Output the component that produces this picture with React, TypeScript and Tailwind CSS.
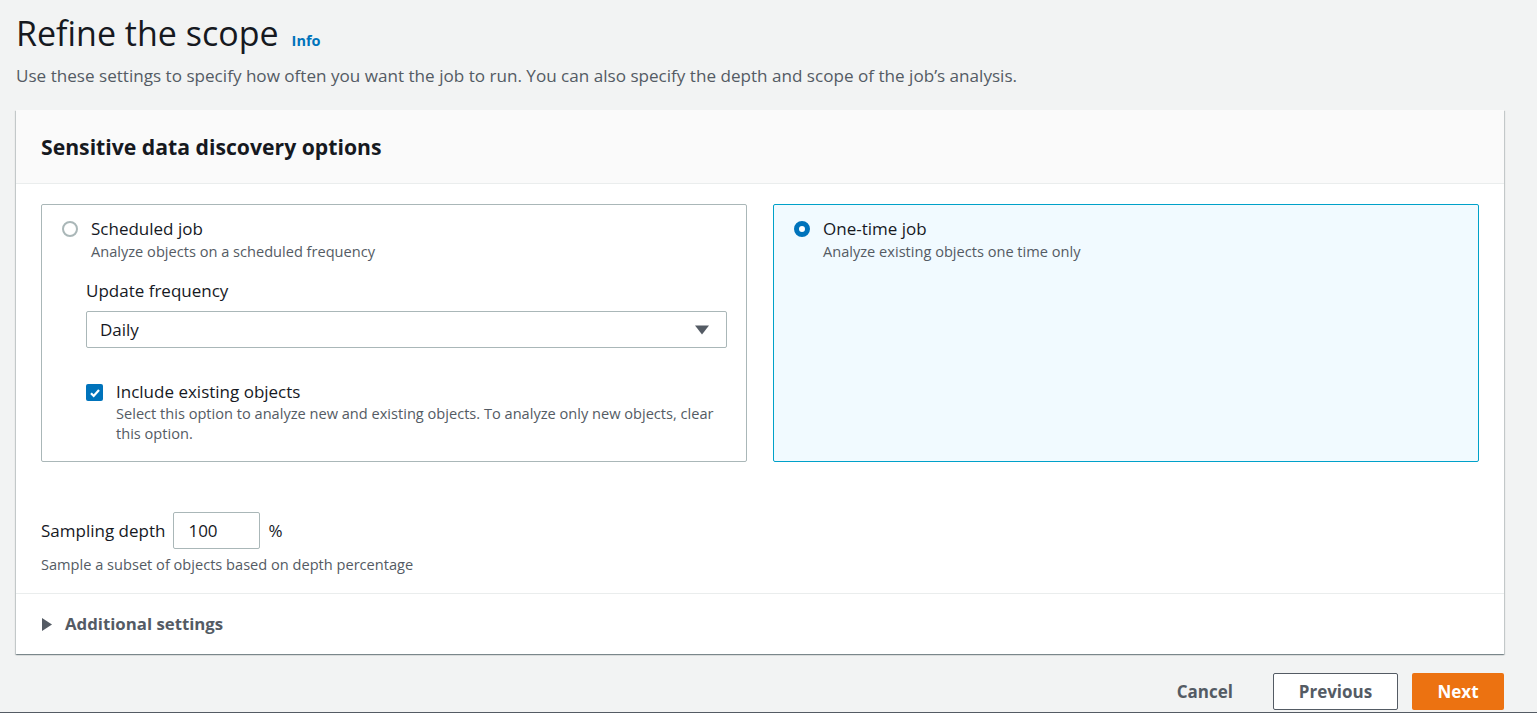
import React, { useState } from 'react';

const font = { fontFamily: '"Open Sans", "Noto Sans", Arial, sans-serif' };

const Radio: React.FC<{ checked: boolean }> = ({ checked }) =>
  checked ? (
    <span className="mt-[3px] block h-4 w-4 shrink-0 rounded-full border-[5px] border-[#0073bb] bg-white" />
  ) : (
    <span className="mt-[3px] block h-4 w-4 shrink-0 rounded-full border-2 border-[#aab7b8] bg-white" />
  );

const App: React.FC = () => {
  const [mode, setMode] = useState<'scheduled' | 'once'>('once');
  const [includeExisting, setIncludeExisting] = useState(true);
  const [depth, setDepth] = useState('100');

  return (
    <div className="flex h-[713px] flex-col overflow-hidden bg-[#f2f3f3] text-[#16191f]" style={font}>
      <div className="flex-1 overflow-hidden pl-4 pr-[33px]">
        <div className="flex items-baseline pt-[12px]">
          <h1 className="text-[34px] leading-[42px] font-normal">Refine the scope</h1>
          <a className="ml-[13px] text-[14.5px] font-bold text-[#0073bb]">Info</a>
        </div>
        <p className="mt-[11px] text-[17.1px] leading-[22px] text-[#545b64]">
          Use these settings to specify how often you want the job to run. You can also specify the depth and scope of the job’s analysis.
        </p>

        <div className="mt-[23px] bg-white shadow-[0_1px_1px_0_rgba(0,28,36,0.3),1px_1px_1px_0_rgba(0,28,36,0.15),-1px_1px_1px_0_rgba(0,28,36,0.15)]">
          <div className="flex h-[74px] items-center border-b border-[#eaeded] bg-[#fafafa] px-[25px]">
            <h2 className="text-[21.2px] font-bold leading-[26px]">Sensitive data discovery options</h2>
          </div>

          <div className="px-[25px] pt-[20px]">
            <div className="grid grid-cols-2 gap-[26px]">
              <div
                className={`h-[258px] rounded-[2px] border pl-5 pr-[19px] pt-[13px] ${
                  mode === 'scheduled' ? 'border-[#00a1c9] bg-[#f1faff]' : 'border-[#aab7b8] bg-white'
                }`}
                onClick={() => setMode('scheduled')}
              >
                <div className="flex gap-[13px]">
                  <Radio checked={mode === 'scheduled'} />
                  <div>
                    <div className="text-[17px] leading-[22px]">Scheduled job</div>
                    <div className="text-[14.6px] leading-[22px] text-[#545b64]">Analyze objects on a scheduled frequency</div>
                  </div>
                </div>
                <div className="pl-[24px]">
                  <div className="mt-[18px] text-[17px] leading-[22px]">Update frequency</div>
                  <div className="mt-[9px] flex h-[37px] items-center justify-between rounded-[2px] border border-[#aab7b8] bg-white pl-[13px] pr-[17px]">
                    <span className="text-[17px]">Daily</span>
                    <svg width="14" height="10" viewBox="0 0 14 10">
                      <path d="M0 0.5h14L7 9.5z" fill="#545b64" />
                    </svg>
                  </div>
                  <div className="mt-[33px] flex gap-[13px]">
                    <button
                      className={`mt-[3px] flex h-[17px] w-[17px] shrink-0 items-center justify-center rounded-[2px] ${
                        includeExisting ? 'bg-[#0073bb]' : 'border-2 border-[#aab7b8] bg-white'
                      }`}
                      onClick={(e) => {
                        e.stopPropagation();
                        setIncludeExisting(!includeExisting);
                      }}
                    >
                      {includeExisting && (
                        <svg width="12" height="12" viewBox="0 0 12 12">
                          <path d="M2 6.2l2.7 2.8L10 3" fill="none" stroke="#fff" strokeWidth="2.2" />
                        </svg>
                      )}
                    </button>
                    <div>
                      <div className="text-[17px] leading-[22px]">Include existing objects</div>
                      <div className="text-[14.6px] leading-[20px] text-[#545b64]">
                        Select this option to analyze new and existing objects. To analyze only new objects, clear this option.
                      </div>
                    </div>
                  </div>
                </div>
              </div>

              <div
                className={`h-[258px] rounded-[2px] border px-5 pt-[13px] ${
                  mode === 'once' ? 'border-[#00a1c9] bg-[#f1faff]' : 'border-[#aab7b8] bg-white'
                }`}
                onClick={() => setMode('once')}
              >
                <div className="flex gap-[13px]">
                  <Radio checked={mode === 'once'} />
                  <div>
                    <div className="text-[17px] leading-[22px]">One-time job</div>
                    <div className="text-[14.6px] leading-[22px] text-[#545b64]">Analyze existing objects one time only</div>
                  </div>
                </div>
              </div>
            </div>

            <div className="mt-[50px] flex items-center">
              <span className="text-[17px] leading-[22px]">Sampling depth</span>
              <input
                className="ml-[8px] h-[37px] w-[87px] rounded-[2px] border border-[#aab7b8] bg-white px-[14px] text-[17px] text-[#16191f] outline-none"
                value={depth}
                onChange={(e) => setDepth(e.target.value)}
              />
              <span className="ml-[8px] text-[17px]">%</span>
            </div>
            <div className="mt-[5px] pb-[19px] text-[14.6px] leading-[20px] text-[#545b64]">
              Sample a subset of objects based on depth percentage
            </div>
          </div>

          <div className="flex items-center gap-[13px] border-t border-[#eaeded] px-[26px] py-[19px]">
            <svg width="10" height="13" viewBox="0 0 10 13">
              <path d="M0 0l10 6.5-10 6.5z" fill="#545b64" />
            </svg>
            <span className="text-[16.8px] font-bold leading-[22px] text-[#545b64]">Additional settings</span>
          </div>
        </div>

        <div className="mt-[19px] flex justify-end">
          <button className="h-[37px] px-5 text-[17px] font-bold text-[#545b64]">Cancel</button>
          <button className="ml-5 h-[37px] w-[125px] rounded-[2px] border border-[#545b64] bg-white text-[17px] font-bold text-[#545b64]">
            Previous
          </button>
          <button className="ml-[14px] h-[37px] w-[92px] rounded-[2px] bg-[#ec7211] text-[17px] font-bold text-white">Next</button>
        </div>
      </div>
      <div className="h-px shrink-0 bg-[#545b64]" />
    </div>
  );
};

export default App;
